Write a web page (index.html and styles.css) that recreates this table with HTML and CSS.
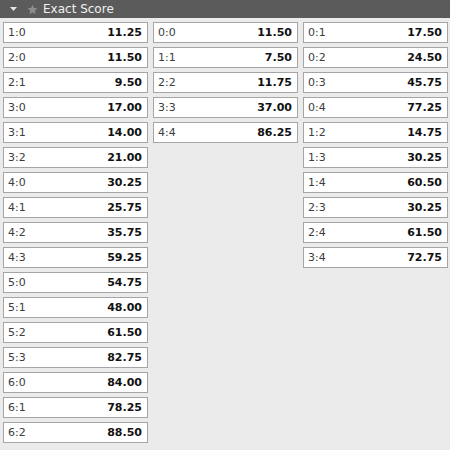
FILE: index.html
```html
<!DOCTYPE html>
<html>
<head>
<meta charset="utf-8">
<link rel="stylesheet" href="styles.css">
</head>
<body>
<div class="header">
  <svg class="arrow" width="7" height="4" viewBox="0 0 7 4"><path d="M0 0 L7 0 L3.5 4 Z" fill="#e6e6e6"/></svg>
  <svg class="star" width="11" height="11" viewBox="0 0 24 24"><path d="M12 1.5l3.1 7.2 7.8.7-5.9 5.2 1.8 7.7L12 18.2 5.2 22.3 7 14.6 1.1 9.4l7.8-.7z" fill="#8c8c8c"/></svg>
  <span class="title">Exact Score</span>
</div>
<div class="grid">
  <div class="col">
    <div class="cell"><span class="lbl">1:0</span><span class="val">11.25</span></div>
    <div class="cell"><span class="lbl">2:0</span><span class="val">11.50</span></div>
    <div class="cell"><span class="lbl">2:1</span><span class="val">9.50</span></div>
    <div class="cell"><span class="lbl">3:0</span><span class="val">17.00</span></div>
    <div class="cell"><span class="lbl">3:1</span><span class="val">14.00</span></div>
    <div class="cell"><span class="lbl">3:2</span><span class="val">21.00</span></div>
    <div class="cell"><span class="lbl">4:0</span><span class="val">30.25</span></div>
    <div class="cell"><span class="lbl">4:1</span><span class="val">25.75</span></div>
    <div class="cell"><span class="lbl">4:2</span><span class="val">35.75</span></div>
    <div class="cell"><span class="lbl">4:3</span><span class="val">59.25</span></div>
    <div class="cell"><span class="lbl">5:0</span><span class="val">54.75</span></div>
    <div class="cell"><span class="lbl">5:1</span><span class="val">48.00</span></div>
    <div class="cell"><span class="lbl">5:2</span><span class="val">61.50</span></div>
    <div class="cell"><span class="lbl">5:3</span><span class="val">82.75</span></div>
    <div class="cell"><span class="lbl">6:0</span><span class="val">84.00</span></div>
    <div class="cell"><span class="lbl">6:1</span><span class="val">78.25</span></div>
    <div class="cell"><span class="lbl">6:2</span><span class="val">88.50</span></div>
  </div>
  <div class="col">
    <div class="cell"><span class="lbl">0:0</span><span class="val">11.50</span></div>
    <div class="cell"><span class="lbl">1:1</span><span class="val">7.50</span></div>
    <div class="cell"><span class="lbl">2:2</span><span class="val">11.75</span></div>
    <div class="cell"><span class="lbl">3:3</span><span class="val">37.00</span></div>
    <div class="cell"><span class="lbl">4:4</span><span class="val">86.25</span></div>
  </div>
  <div class="col">
    <div class="cell"><span class="lbl">0:1</span><span class="val">17.50</span></div>
    <div class="cell"><span class="lbl">0:2</span><span class="val">24.50</span></div>
    <div class="cell"><span class="lbl">0:3</span><span class="val">45.75</span></div>
    <div class="cell"><span class="lbl">0:4</span><span class="val">77.25</span></div>
    <div class="cell"><span class="lbl">1:2</span><span class="val">14.75</span></div>
    <div class="cell"><span class="lbl">1:3</span><span class="val">30.25</span></div>
    <div class="cell"><span class="lbl">1:4</span><span class="val">60.50</span></div>
    <div class="cell"><span class="lbl">2:3</span><span class="val">30.25</span></div>
    <div class="cell"><span class="lbl">2:4</span><span class="val">61.50</span></div>
    <div class="cell"><span class="lbl">3:4</span><span class="val">72.75</span></div>
  </div>
</div>
</body>
</html>
```

FILE: styles.css
```css
html, body {
  margin: 0;
  padding: 0;
  background: #ebebeb;
  font-family: "DejaVu Sans", Verdana, sans-serif;
  font-size: 11px;
}
.header {
  height: 18px;
  background: #5b5b5b;
  display: flex;
  align-items: center;
  padding-left: 10px;
  color: #f0f0f0;
}
.arrow {
  margin-right: 10px;
}
.star {
  margin-right: 5px;
}
.title {
  font-size: 12px;
}
.grid {
  display: grid;
  grid-template-columns: 145px 145px 145px;
  column-gap: 5px;
  padding: 4px 0 0 3px;
  align-items: start;
}
.col {
  display: flex;
  flex-direction: column;
  gap: 4px;
}
.cell {
  height: 19px;
  background: #fff;
  border: 1px solid #a5a5a5;
  display: flex;
  align-items: center;
  justify-content: space-between;
  padding: 0 5px 0 4px;
}
.lbl {
  color: #3c3c3c;
}
.val {
  font-weight: bold;
  color: #111;
}
```
